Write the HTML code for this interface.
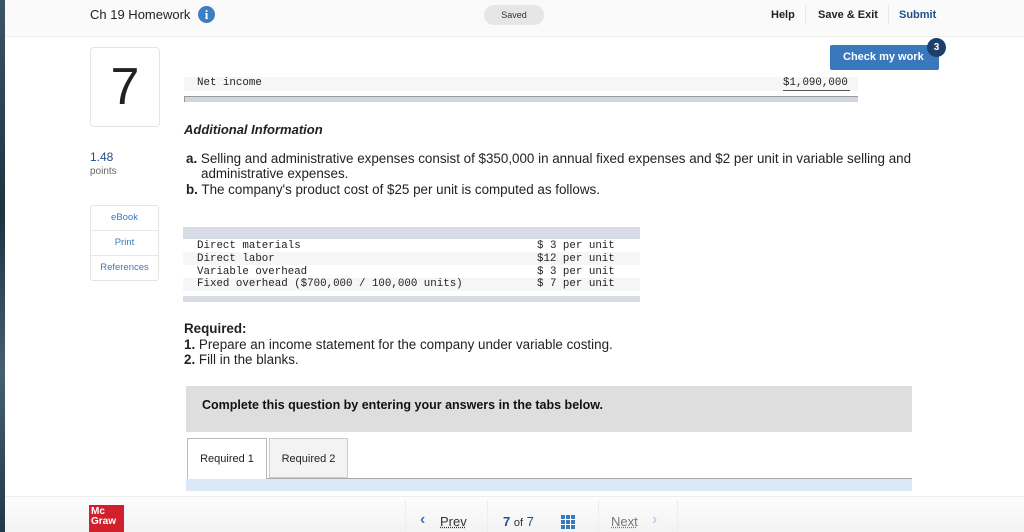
<!DOCTYPE html>
<html><head><style>
*{margin:0;padding:0;box-sizing:border-box}
body{width:1024px;height:532px;overflow:hidden;background:#fff;font-family:"Liberation Sans",sans-serif;color:#222;position:relative}
.a{position:absolute}
.mono{font-family:"Liberation Mono",monospace;font-size:10.8px;color:#222}
.t{font-size:13.4px;color:#222}
</style></head><body>
<div class="a" style="left:0;top:0;width:5px;height:532px;background:linear-gradient(#3a5565,#1d3340 40%,#456070 70%,#20394a)"></div>
<div class="a" style="left:5px;top:0;width:1019px;height:37px;background:#fafafa;border-bottom:1px solid #eee"></div>
<div class="a" style="left:90px;top:7px;font-size:13px;color:#222">Ch 19 Homework</div>
<div class="a" style="left:198px;top:6px;width:17px;height:17px;border-radius:50%;background:#3d7dc4;color:#fff;font-weight:bold;font-size:13px;text-align:center;line-height:17px;font-family:'Liberation Serif',serif">i</div>
<div class="a" style="left:484px;top:5px;width:60px;height:20px;border-radius:10px;background:#e6e6e8;font-size:9px;text-align:center;line-height:20px;color:#333">Saved</div>
<div class="a" style="left:771px;top:9px;font-size:11px;font-weight:bold;color:#222">Help</div>
<div class="a" style="left:805px;top:5px;width:1px;height:20px;background:#e8e8e8"></div>
<div class="a" style="left:818px;top:9px;font-size:11px;font-weight:bold;color:#222">Save &amp; Exit</div>
<div class="a" style="left:888px;top:5px;width:1px;height:20px;background:#e8e8e8"></div>
<div class="a" style="left:899px;top:9px;font-size:11px;font-weight:bold;color:#1d4f8c">Submit</div>
<div class="a" style="left:830px;top:45px;width:109px;height:25px;background:#3a78bd;border-radius:2px;color:#fff;font-weight:bold;font-size:11px;line-height:25px;padding-left:13px">Check my work</div>
<div class="a" style="left:927px;top:38px;width:19px;height:19px;border-radius:50%;background:#1d3f6c;color:#fff;font-weight:bold;font-size:10px;text-align:center;line-height:19px">3</div>

<div class="a" style="left:90px;top:47px;width:70px;height:80px;border:1px solid #e4e4e4;border-radius:4px;font-size:52px;text-align:center;line-height:78px;color:#222">7</div>
<div class="a" style="left:90px;top:150px;font-size:12px;color:#1d4f8c">1.48</div>
<div class="a" style="left:90px;top:166px;font-size:10px;color:#666">points</div>
<div class="a" style="left:90px;top:205px;width:69px;height:76px;border:1px solid #e4e4e4;border-radius:3px">
<div style="height:25px;border-bottom:1px solid #e8e8e8;text-align:center;line-height:24px;font-size:9.5px;color:#3a78bd">eBook</div>
<div style="height:25px;border-bottom:1px solid #e8e8e8;text-align:center;line-height:24px;font-size:9.5px;color:#3a78bd">Print</div>
<div style="height:24px;text-align:center;line-height:24px;font-size:9.5px;color:#3a78bd">References</div>
</div>

<div class="a" style="left:184px;top:77px;width:674px;height:14px;background:#f6f6f6"></div>
<div class="a mono" style="left:197px;top:77px">Net income</div>
<div class="a mono" style="left:783px;top:77px">$1,090,000</div>
<div class="a" style="left:783px;top:90px;width:67px;height:1px;background:#555"></div>
<div class="a" style="left:184px;top:96px;width:674px;height:6px;background:#d0d6e0;border-top:1px solid #999;border-left:1px solid #999"></div>

<div class="a" style="left:184px;top:122px;font-size:13px;font-weight:bold;font-style:italic;color:#222">Additional Information</div>
<div class="a t" style="left:186px;top:151px"><b>a.</b> Selling and administrative expenses consist of $350,000 in annual fixed expenses and $2 per unit in variable selling and</div>
<div class="a t" style="left:201px;top:166px">administrative expenses.</div>
<div class="a t" style="left:186px;top:182px"><b>b.</b> The company's product cost of $25 per unit is computed as follows.</div>

<div class="a" style="left:183px;top:227px;width:457px;height:12px;background:#d8dce6"></div>
<div class="a" style="left:183px;top:252px;width:457px;height:13px;background:#f6f6f6"></div>
<div class="a" style="left:183px;top:278px;width:457px;height:13px;background:#f6f6f6"></div>
<div class="a" style="left:183px;top:296px;width:457px;height:6px;background:#d8dce6"></div>
<div class="a mono" style="left:197px;top:240px;line-height:12.8px;white-space:pre">Direct materials
Direct labor
Variable overhead
Fixed overhead ($700,000 / 100,000 units)</div>
<div class="a mono" style="left:537px;top:240px;line-height:12.8px;white-space:pre">$ 3 per unit
$12 per unit
$ 3 per unit
$ 7 per unit</div>

<div class="a t" style="left:184px;top:321px;font-weight:bold">Required:</div>
<div class="a t" style="left:184px;top:337px"><b>1.</b> Prepare an income statement for the company under variable costing.</div>
<div class="a t" style="left:184px;top:352px"><b>2.</b> Fill in the blanks.</div>

<div class="a" style="left:186px;top:386px;width:726px;height:46px;background:#dedede"></div>
<div class="a" style="left:202px;top:398px;font-size:12.5px;font-weight:bold;color:#111">Complete this question by entering your answers in the tabs below.</div>
<div class="a" style="left:187px;top:438px;width:80px;height:41px;background:#fff;border:1px solid #bbb;border-bottom:none;font-size:11px;text-align:center;line-height:40px">Required 1</div>
<div class="a" style="left:269px;top:438px;width:79px;height:40px;background:#f3f3f3;border:1px solid #ccc;font-size:11px;text-align:center;line-height:40px">Required 2</div>
<div class="a" style="left:267px;top:478px;width:645px;height:1px;background:#aaa"></div>
<div class="a" style="left:186px;top:479px;width:726px;height:12px;background:#dbe9f6"></div>

<div class="a" style="left:5px;top:496px;width:1019px;height:36px;background:linear-gradient(#fdfdfd,#f3f3f3);border-top:1px solid #eee"></div>
<div class="a" style="left:89px;top:505px;width:35px;height:27px;background:#d0202c;color:#fff;font-weight:bold;font-size:10px;line-height:10px;padding:2px 0 0 2px">Mc<br>Graw</div>
<div class="a" style="left:405px;top:499px;width:1px;height:33px;background:#eee"></div>
<div class="a" style="left:487px;top:499px;width:1px;height:33px;background:#eee"></div>
<div class="a" style="left:598px;top:499px;width:1px;height:33px;background:#eee"></div>
<div class="a" style="left:677px;top:499px;width:1px;height:33px;background:#eee"></div>
<div class="a" style="left:420px;top:511px;font-size:16px;color:#3a78bd;font-weight:bold">‹</div>
<div class="a" style="left:440px;top:514px;font-size:13px;color:#333;text-decoration:underline dotted">Prev</div>
<div class="a" style="left:503px;top:514px;font-size:13px;color:#1d4f8c"><b>7</b> <span style="color:#333;font-size:11px">of</span> 7</div>
<div class="a" style="left:561px;top:515px;width:14px;height:14px;background:repeating-linear-gradient(90deg,#3a78bd 0 4px,#fff 4px 5px),#3a78bd"></div>
<div class="a" style="left:561px;top:519px;width:14px;height:1px;background:#fff"></div>
<div class="a" style="left:561px;top:524px;width:14px;height:1px;background:#fff"></div>
<div class="a" style="left:611px;top:514px;font-size:13px;color:#777;text-decoration:underline dotted">Next</div>
<div class="a" style="left:652px;top:511px;font-size:16px;color:#bcd2ec;font-weight:bold">›</div>
</body></html>
